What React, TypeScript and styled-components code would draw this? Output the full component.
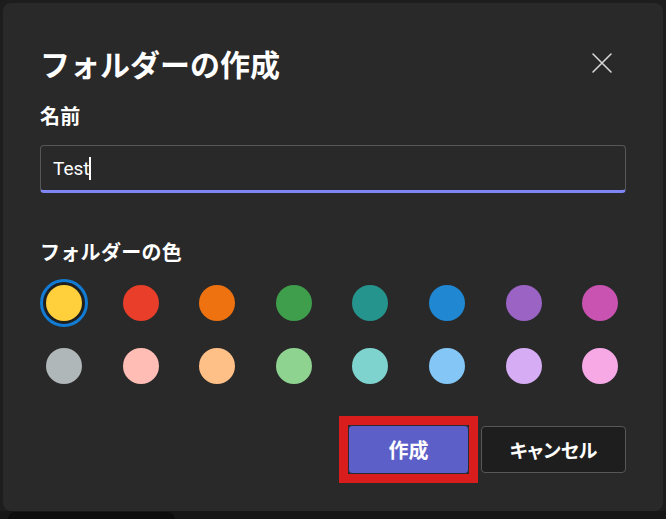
import React from "react";
import styled, { createGlobalStyle } from "styled-components";

const GlobalStyle = createGlobalStyle`
  html, body { margin: 0; padding: 0; }
  body {
    background: #1e1e1e;
    overflow: hidden;
    font-family: "Noto Sans CJK JP", "Noto Sans", sans-serif;
  }
  * { box-sizing: border-box; }
`;

const Page = styled.div`
  width: 666px;
  height: 519px;
  display: flex;
  flex-direction: column;
  padding: 3px 3px 0 3px;
  background: #1d1d1d;
`;

const Dialog = styled.div`
  width: 660px;
  height: 508px;
  flex: none;
  background: #292929;
  border-radius: 8px;
  padding: 40px 37px 37px 37px;
  display: flex;
  flex-direction: column;
  color: #ffffff;
`;

const BottomStrip = styled.div`
  flex: 1;
  margin: 0 -3px;
  background: #171717;
  padding: 1px 0 0 8px;
`;

const BottomBlock = styled.div`
  width: 167px;
  height: 100%;
  background: #0d0d0d;
  border-radius: 8px 8px 0 0;
`;

const Header = styled.div`
  display: flex;
  align-items: center;
  justify-content: space-between;
  height: 40px;
`;

const Title = styled.h1`
  margin: 0;
  font-size: 30px;
  line-height: 40px;
  font-weight: 700;
`;

const CloseButton = styled.button`
  width: 32px;
  height: 32px;
  margin-right: 8px;
  border: 0;
  padding: 0;
  background: transparent;
  display: flex;
  align-items: center;
  justify-content: center;
  color: #d6d6d6;
`;

const Label = styled.div<{ $top: number }>`
  margin-top: ${(p) => p.$top}px;
  font-size: 20px;
  line-height: 28px;
  font-weight: 700;
  letter-spacing: 0.3px;
`;

const Field = styled.div`
  margin-top: 15px;
  height: 48px;
  border: 1px solid #575757;
  border-bottom: 3px solid #7f85f5;
  border-radius: 4px;
  background: #292929;
  display: flex;
  align-items: center;
  padding: 0 12px;
  font-family: Roboto, "Noto Sans", sans-serif;
  font-size: 19px;
  color: #ffffff;
`;

const Caret = styled.span`
  display: inline-block;
  width: 2px;
  height: 23px;
  margin-left: -1px;
  background: #ffffff;
`;

const Swatches = styled.div`
  margin-top: 13px;
  display: grid;
  grid-template-columns: repeat(8, 48px);
  column-gap: 28.6px;
  row-gap: 15px;
`;

const Swatch = styled.button<{ $selected?: boolean }>`
  width: 48px;
  height: 48px;
  border-radius: 50%;
  padding: 0;
  border: 3px solid ${(p) => (p.$selected ? "#127bd4" : "transparent")};
  background: ${(p) => (p.$selected ? "#1f1f1f" : "transparent")};
  display: flex;
  align-items: center;
  justify-content: center;
`;

const Dot = styled.span<{ $color: string }>`
  width: 36px;
  height: 36px;
  border-radius: 50%;
  background: ${(p) => p.$color};
`;

const Actions = styled.div`
  margin-top: 35px;
  display: flex;
  justify-content: flex-end;
  align-items: center;
  gap: 12px;
`;

const Highlight = styled.span`
  display: flex;
  margin: -9px;
  border: 9px solid #d91c1c;
`;

const PrimaryButton = styled.button`
  width: 121px;
  height: 49px;
  border: 1px solid #2a2a33;
  border-radius: 4px;
  background: #5b5fc7;
  color: #ffffff;
  font-family: "Noto Sans CJK JP", sans-serif;
  font-size: 20px;
  font-weight: 700;
`;

const SecondaryButton = styled.button`
  width: 145px;
  height: 47px;
  border: 1px solid #575757;
  border-radius: 4px;
  background: #1e1e1e;
  color: #ffffff;
  font-family: "Noto Sans CJK JP", sans-serif;
  font-size: 19px;
  font-weight: 700;
  font-feature-settings: "palt";
`;

const colors = [
  "#ffd03b",
  "#e83e2a",
  "#ef7210",
  "#3f9e4b",
  "#25948c",
  "#2088d3",
  "#9b63c4",
  "#c853b1",
  "#b0b7b9",
  "#ffbdb5",
  "#ffc088",
  "#8fd391",
  "#7ed3cf",
  "#84c7f7",
  "#d6adf4",
  "#f7a9e6",
];

export default function App() {
  return (
    <>
      <GlobalStyle />
      <Page>
        <Dialog>
          <Header>
            <Title>フォルダーの作成</Title>
            <CloseButton aria-label="閉じる">
              <svg width="20" height="20" viewBox="0 0 20 20">
                <path d="M1 1 L19 19 M19 1 L1 19" stroke="currentColor" strokeWidth="1.6" strokeLinecap="round" />
              </svg>
            </CloseButton>
          </Header>
          <Label $top={19}>名前</Label>
          <Field>
            Test
            <Caret />
          </Field>
          <Label $top={45}>フォルダーの色</Label>
          <Swatches>
            {colors.map((c, i) => (
              <Swatch key={c} $selected={i === 0} aria-label={c}>
                <Dot $color={c} />
              </Swatch>
            ))}
          </Swatches>
          <Actions>
            <Highlight>
              <PrimaryButton>作成</PrimaryButton>
            </Highlight>
            <SecondaryButton>キャンセル</SecondaryButton>
          </Actions>
        </Dialog>
        <BottomStrip>
          <BottomBlock />
        </BottomStrip>
      </Page>
    </>
  );
}
